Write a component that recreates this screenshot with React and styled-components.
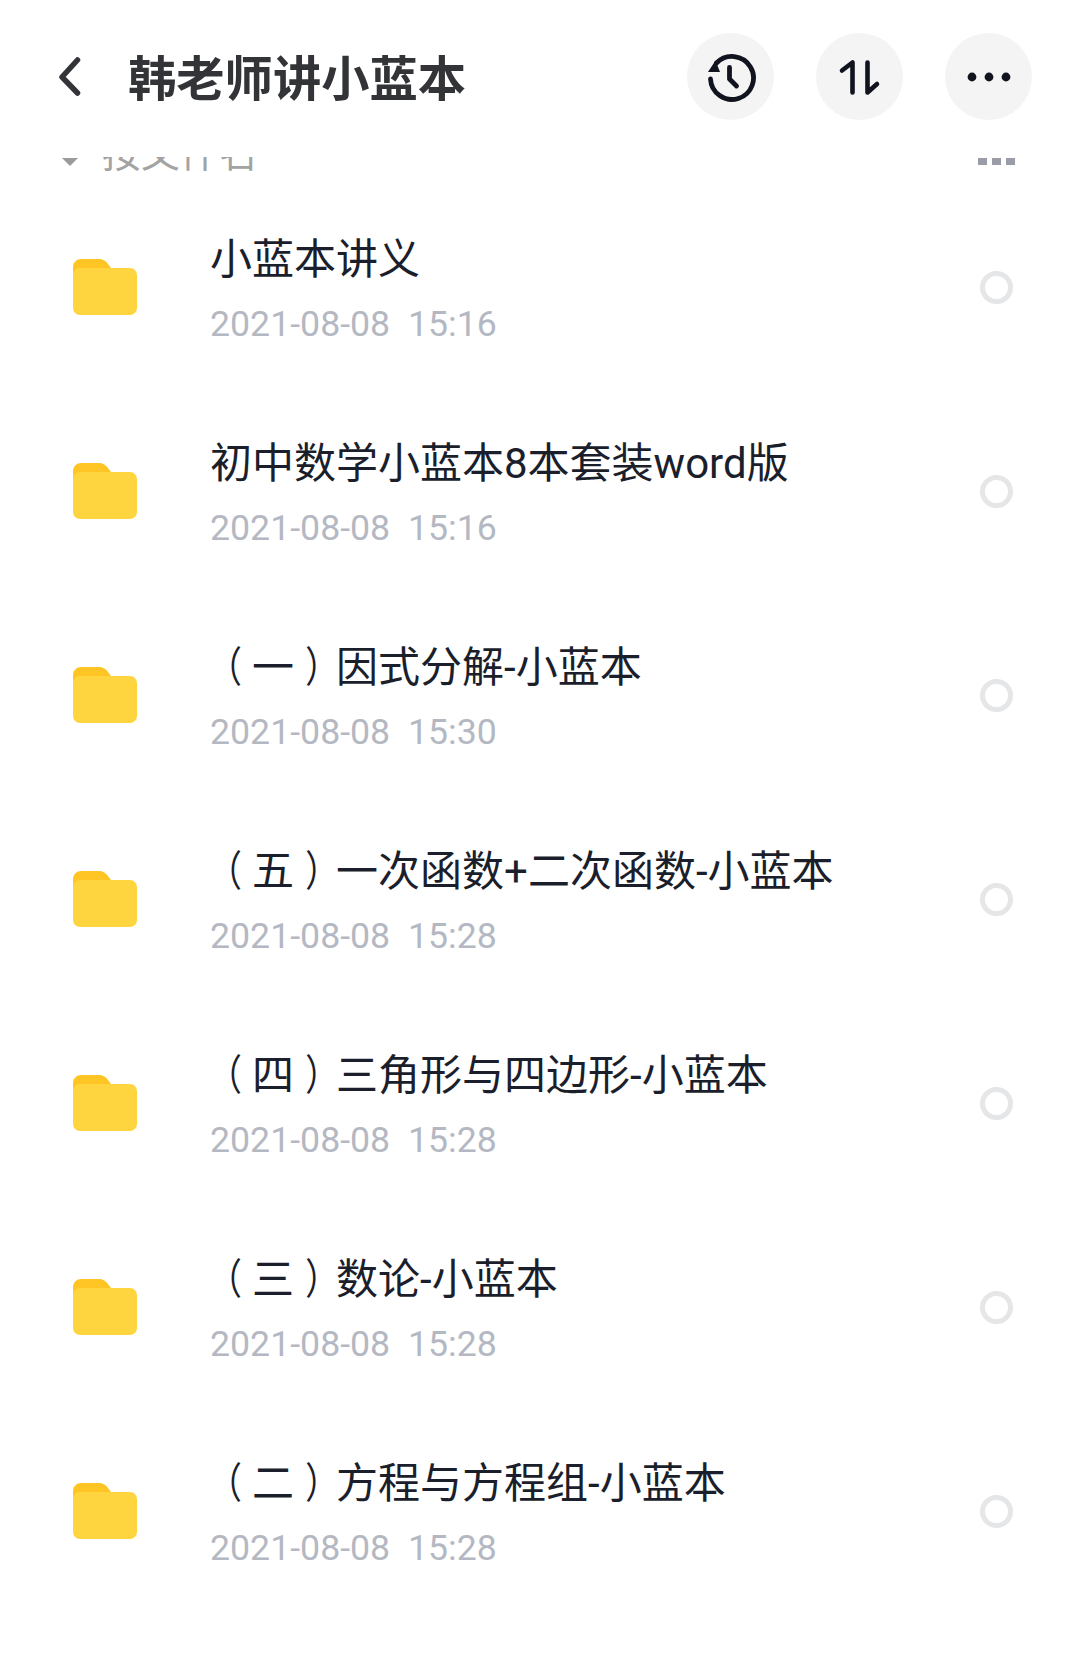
import React from 'react';
import styled, { createGlobalStyle } from 'styled-components';

const GlobalStyle = createGlobalStyle`
  html, body {
    margin: 0;
    padding: 0;
    background: #fff;
  }
  body {
    font-family: Roboto, "Noto Sans CJK SC", sans-serif;
  }
`;

const Page = styled.div`
  width: 1080px;
  height: 1663px;
  overflow: hidden;
  background: #fff;
`;

const Header = styled.header`
  height: 157px;
  display: flex;
  align-items: flex-start;
  padding: 33px 48px 0 57px;
  box-sizing: border-box;
`;

const BackButton = styled.div`
  width: 30px;
  height: 88px;
  display: flex;
  align-items: center;
  margin-right: 41px;
`;

const PageTitle = styled.h1`
  flex: 1;
  margin: 0;
  padding-top: 4px;
  font-size: 48.3px;
  line-height: 86px;
  font-weight: 700;
  color: #333437;
`;

const Actions = styled.div`
  display: flex;
  gap: 42px;
`;

const RoundButton = styled.div`
  width: 87px;
  height: 87px;
  border-radius: 50%;
  background: #f4f4f5;
  display: flex;
  align-items: center;
  justify-content: center;
`;

const SectionBar = styled.div`
  height: 16px;
  display: flex;
  align-items: flex-end;
  justify-content: space-between;
  padding: 0 65px 0 62px;
  overflow: hidden;
`;

const SectionLabel = styled.div`
  display: flex;
  align-items: flex-end;
  gap: 24px;
  height: 16px;
`;

const SectionArrow = styled.span`
  width: 0;
  height: 0;
  border-left: 8px solid transparent;
  border-right: 8px solid transparent;
  border-top: 8px solid #9b9b9b;
  margin-bottom: 7px;
`;

const SectionText = styled.span`
  font-size: 39px;
  line-height: 38px;
  color: #a3a3a3;
`;

const SectionDots = styled.div`
  display: flex;
  gap: 5px;
  margin-bottom: 8px;

  span {
    width: 9px;
    height: 7px;
    background: #9a9ca8;
  }
`;

const List = styled.div`
  display: flex;
  flex-direction: column;
  padding-top: 12px;
`;

const Row = styled.div`
  height: 204px;
  display: flex;
  align-items: center;
  padding: 0 67px 0 73px;
`;

const FolderIcon = styled.svg`
  width: 64px;
  height: 56px;
  flex: none;
  margin-right: 73px;
`;

const RowBody = styled.div`
  flex: 1;
  min-width: 0;
  padding-top: 3px;
`;

const RowTitle = styled.div`
  height: 54px;
  font-size: 42px;
  line-height: 54px;
  color: #1b1e2b;
  white-space: nowrap;
`;

const Paren = styled.span`
  display: inline-block;
  line-height: 1;
  transform: translateX(${(p) => p.$shift}px) scaleX(0.8);
`;

const RowDate = styled.div`
  font-size: 35.7px;
  line-height: 42px;
  margin-top: 16px;
  color: #b4b8c2;
  white-space: pre;
`;

const Radio = styled.div`
  width: 33px;
  height: 33px;
  box-sizing: border-box;
  border: 5px solid #e5e6e8;
  border-radius: 50%;
  flex: none;
`;

const files = [
  { name: '小蓝本讲义', time: '2021-08-08  15:16' },
  { name: '初中数学小蓝本8本套装word版', time: '2021-08-08  15:16' },
  { name: '（一）因式分解-小蓝本', time: '2021-08-08  15:30' },
  { name: '（五）一次函数+二次函数-小蓝本', time: '2021-08-08  15:28' },
  { name: '（四）三角形与四边形-小蓝本', time: '2021-08-08  15:28' },
  { name: '（三）数论-小蓝本', time: '2021-08-08  15:28' },
  { name: '（二）方程与方程组-小蓝本', time: '2021-08-08  15:28' },
];

// the full-width brackets sit further out from the numeral in the original
const renderName = (name) =>
  name.split(/([（）])/).map((part, i) => {
    if (part === '（') return <Paren key={i} $shift={-6}>{part}</Paren>;
    if (part === '）') return <Paren key={i} $shift={7}>{part}</Paren>;
    return part;
  });

const Folder = () => (
  <FolderIcon viewBox="0 0 64 56">
    <path d="M0 8a8 8 0 0 1 8-8h18c4 0 7 2 9 5l3 4v12H0z" fill="#ffc524" />
    <path d="M0 16a7 7 0 0 1 7-7h50a7 7 0 0 1 7 7v33a7 7 0 0 1-7 7H7a7 7 0 0 1-7-7z" fill="#ffd53f" />
  </FolderIcon>
);

const App = () => (
  <Page>
    <GlobalStyle />
    <Header>
      <BackButton>
        <svg width="24" height="42" viewBox="0 0 24 42" fill="none">
          <path d="M20.500 4 5 21l15.500 16" stroke="#333437" strokeWidth="5.500" strokeLinecap="round" strokeLinejoin="round" />
        </svg>
      </BackButton>
      <PageTitle>韩老师讲小蓝本</PageTitle>
      <Actions>
        <RoundButton>
          <svg width="50" height="50" viewBox="0 0 50 50" fill="none">
            <path d="M10.500 11A21.500 21.500 0 1 1 4.500 27" stroke="#11131f" strokeWidth="4.800" strokeLinecap="round" />
            <path d="M2 20 9.500 8.500 14 20z" fill="#11131f" />
            <path d="M23.500 15.500V27l7 7" stroke="#11131f" strokeWidth="4.800" strokeLinecap="round" strokeLinejoin="round" />
          </svg>
        </RoundButton>
        <RoundButton>
          <svg width="44" height="40" viewBox="0 0 44 40" fill="none">
            <path d="M4 13.500 14.500 5.500v30" stroke="#11131f" strokeWidth="4.600" strokeLinecap="round" strokeLinejoin="round" />
            <path d="M29.500 5.500v30l9.500-8.500" stroke="#11131f" strokeWidth="4.600" strokeLinecap="round" strokeLinejoin="round" />
          </svg>
        </RoundButton>
        <RoundButton>
          <svg width="44" height="10" viewBox="0 0 44 10" fill="#11131f">
            <circle cx="5" cy="5" r="4.400" />
            <circle cx="22" cy="5" r="4.400" />
            <circle cx="39" cy="5" r="4.400" />
          </svg>
        </RoundButton>
      </Actions>
    </Header>
    <SectionBar>
      <SectionLabel>
        <SectionArrow />
        <SectionText>按文件名</SectionText>
      </SectionLabel>
      <SectionDots>
        <span />
        <span />
        <span />
      </SectionDots>
    </SectionBar>
    <List>
      {files.map((file) => (
        <Row key={file.name}>
          <Folder />
          <RowBody>
            <RowTitle>{renderName(file.name)}</RowTitle>
            <RowDate>{file.time}</RowDate>
          </RowBody>
          <Radio />
        </Row>
      ))}
    </List>
  </Page>
);

export default App;
